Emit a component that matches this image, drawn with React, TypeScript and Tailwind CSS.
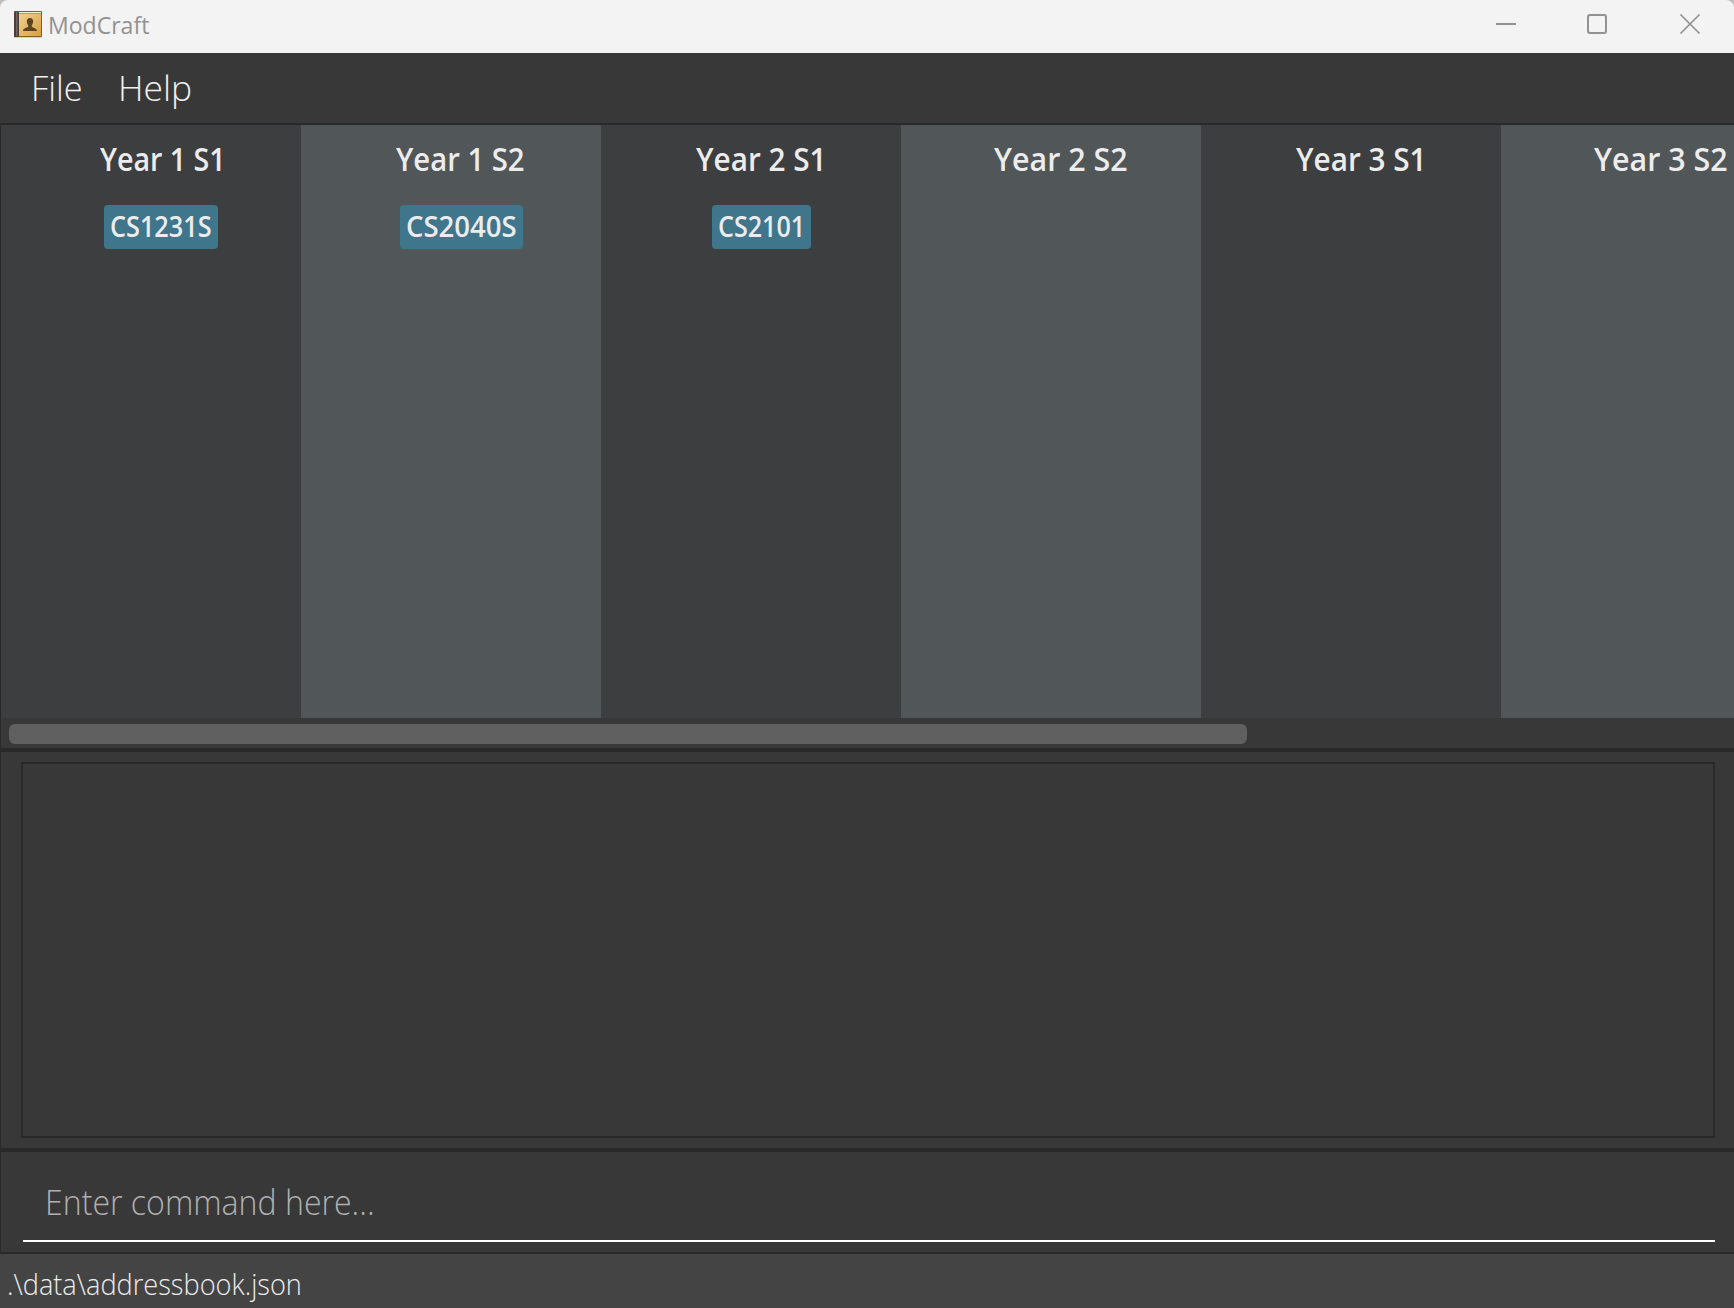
import { useEffect, useRef } from 'react';

const semesters = [
  { title: 'Year 1 S1', titleBox: 'w-[126px] ml-[23px]', module: 'CS1231S', chip: 'w-[114px]' },
  { title: 'Year 1 S2', titleBox: 'w-[129px] ml-[19px]', module: 'CS2040S', chip: 'w-[123px]' },
  { title: 'Year 2 S1', titleBox: 'w-[131px] ml-[21px]', module: 'CS2101', chip: 'w-[99px]' },
  { title: 'Year 2 S2', titleBox: 'w-[134px] ml-[20px]' },
  { title: 'Year 3 S1', titleBox: 'w-[131px] ml-[21px]' },
  { title: 'Year 3 S2', titleBox: 'w-[134px] ml-[20px]' },
];

/** Text condensed or stretched horizontally to fill its box. */
function FitText({ text, className }: { text: string; className: string }) {
  const ref = useRef<HTMLSpanElement>(null);
  useEffect(() => {
    const el = ref.current;
    if (!el || !el.parentElement) return;
    el.style.transform = `scaleX(${el.parentElement.clientWidth / el.offsetWidth})`;
  }, [text]);
  return (
    <span className={`block whitespace-nowrap ${className}`}>
      <span ref={ref} className="inline-block origin-left">
        {text}
      </span>
    </span>
  );
}

function BookIcon() {
  return (
    <svg className="ml-[13px] mt-[10px] shrink-0" width="30" height="30" viewBox="0 0 30 30">
      <defs>
        <linearGradient id="cover" x1="0" y1="0" x2="1" y2="1">
          <stop offset="0" stopColor="#f0d092" />
          <stop offset="1" stopColor="#d9a040" />
        </linearGradient>
      </defs>
      <rect x="1" y="26.500" width="28" height="1.500" rx="0.700" fill="#cfcfcf" />
      <rect x="1" y="1" width="28" height="26" rx="1" fill="#8b5f17" />
      <rect x="6" y="2" width="22" height="1.400" fill="#f7efd8" />
      <rect x="6" y="4" width="22" height="22" fill="url(#cover)" />
      <rect x="1" y="1.500" width="5" height="25.500" rx="1" fill="#4c3d3b" />
      <rect x="3" y="2" width="1.500" height="24" fill="#75625d" />
      <path
        d="M17 8c-2 0-3.200 1.300-3.200 3.500 0 1.600.6 2.700 1.400 3.600v1.600c-1.300 1-5.200 1.300-5.200 4.300h14c0-3-3.900-3.300-5.200-4.300v-1.600c.8-.9 1.400-2 1.400-3.600C20.200 9.300 19 8 17 8z"
        fill="#5d4524"
      />
    </svg>
  );
}

export default function App() {
  return (
    <div className="flex h-[1308px] w-[1734px] flex-col overflow-hidden bg-[#383838] font-['Open_Sans','Noto_Sans',sans-serif]">
      <div className="h-[53px] shrink-0 bg-[#bdbdbd]">
        <header className="flex h-[53px] items-start rounded-t-[8px] bg-[#f3f3f3] text-[#929292]">
          <BookIcon />
          <FitText text="ModCraft" className="ml-[5px] mt-[9px] w-[101px] text-[23.500px] leading-[32px]" />
          <svg className="ml-auto" width="274" height="53" viewBox="0 0 274 53" fill="none" stroke="#929292">
            <path d="M36 24h20" strokeWidth="2" />
            <rect x="128" y="15" width="18" height="18" rx="2" strokeWidth="2" />
            <path d="M220.500 14.500l19 19M239.500 14.500l-19 19" strokeWidth="1.700" />
          </svg>
        </header>
      </div>

      <nav className="flex h-[72px] shrink-0 border-b-2 border-[#292929] font-light text-[#f0f0f0]">
        <FitText text="File" className="ml-[31px] mt-[11px] w-[52px] text-[35px] leading-[48px]" />
        <FitText text="Help" className="ml-[35px] mt-[11px] w-[74px] text-[35px] leading-[48px]" />
      </nav>

      <main className="flex shrink-0 flex-col border-l border-[#292929]">
        <div className="flex h-[593px] overflow-hidden">
          {semesters.map((s, i) => (
            <section
              key={s.title}
              className={`flex w-[300px] shrink-0 flex-col items-center ${i % 2 ? 'bg-[#515658]' : 'bg-[#3c3e3f]'}`}
            >
              <FitText
                text={s.title}
                className={`${s.titleBox} mt-[12px] text-[32px] leading-[44px] font-semibold text-[#ececec]`}
              />
              {s.module && (
                <div className={`${s.chip} mt-[24px] ml-[20px] h-[44px] rounded-[4px] bg-[#3f768b] px-[6px]`}>
                  <FitText text={s.module} className="text-[28px] leading-[43px] font-semibold text-[#ececec]" />
                </div>
              )}
            </section>
          ))}
        </div>
        <div className="h-[30px] pt-[6px] pl-[8px]">
          <div className="h-[20px] w-[1238px] rounded-[6px] bg-[#606060]" />
        </div>
        <div className="h-[404px] border-y-4 border-[#292929] pt-[10px] pl-[20px]">
          <div className="h-[376px] w-[1694px] border-2 border-[#292929]" />
        </div>
        <div className="h-[100px] pl-[22px]">
          <div className="h-[90px] w-[1692px] border-b-2 border-white pt-[26px] pl-[22px]">
            <FitText
              text="Enter command here..."
              className="w-[330px] text-[35px] leading-[47px] font-light text-[#b0b0b0]"
            />
          </div>
        </div>
      </main>

      <footer className="h-[56px] shrink-0 border-t-2 border-[#292929] bg-[#444444] pl-[7px]">
        <FitText
          text=".\data\addressbook.json"
          className="mt-[10px] w-[295px] text-[29px] leading-[40px] font-light text-[#ececec]"
        />
      </footer>
    </div>
  );
}
